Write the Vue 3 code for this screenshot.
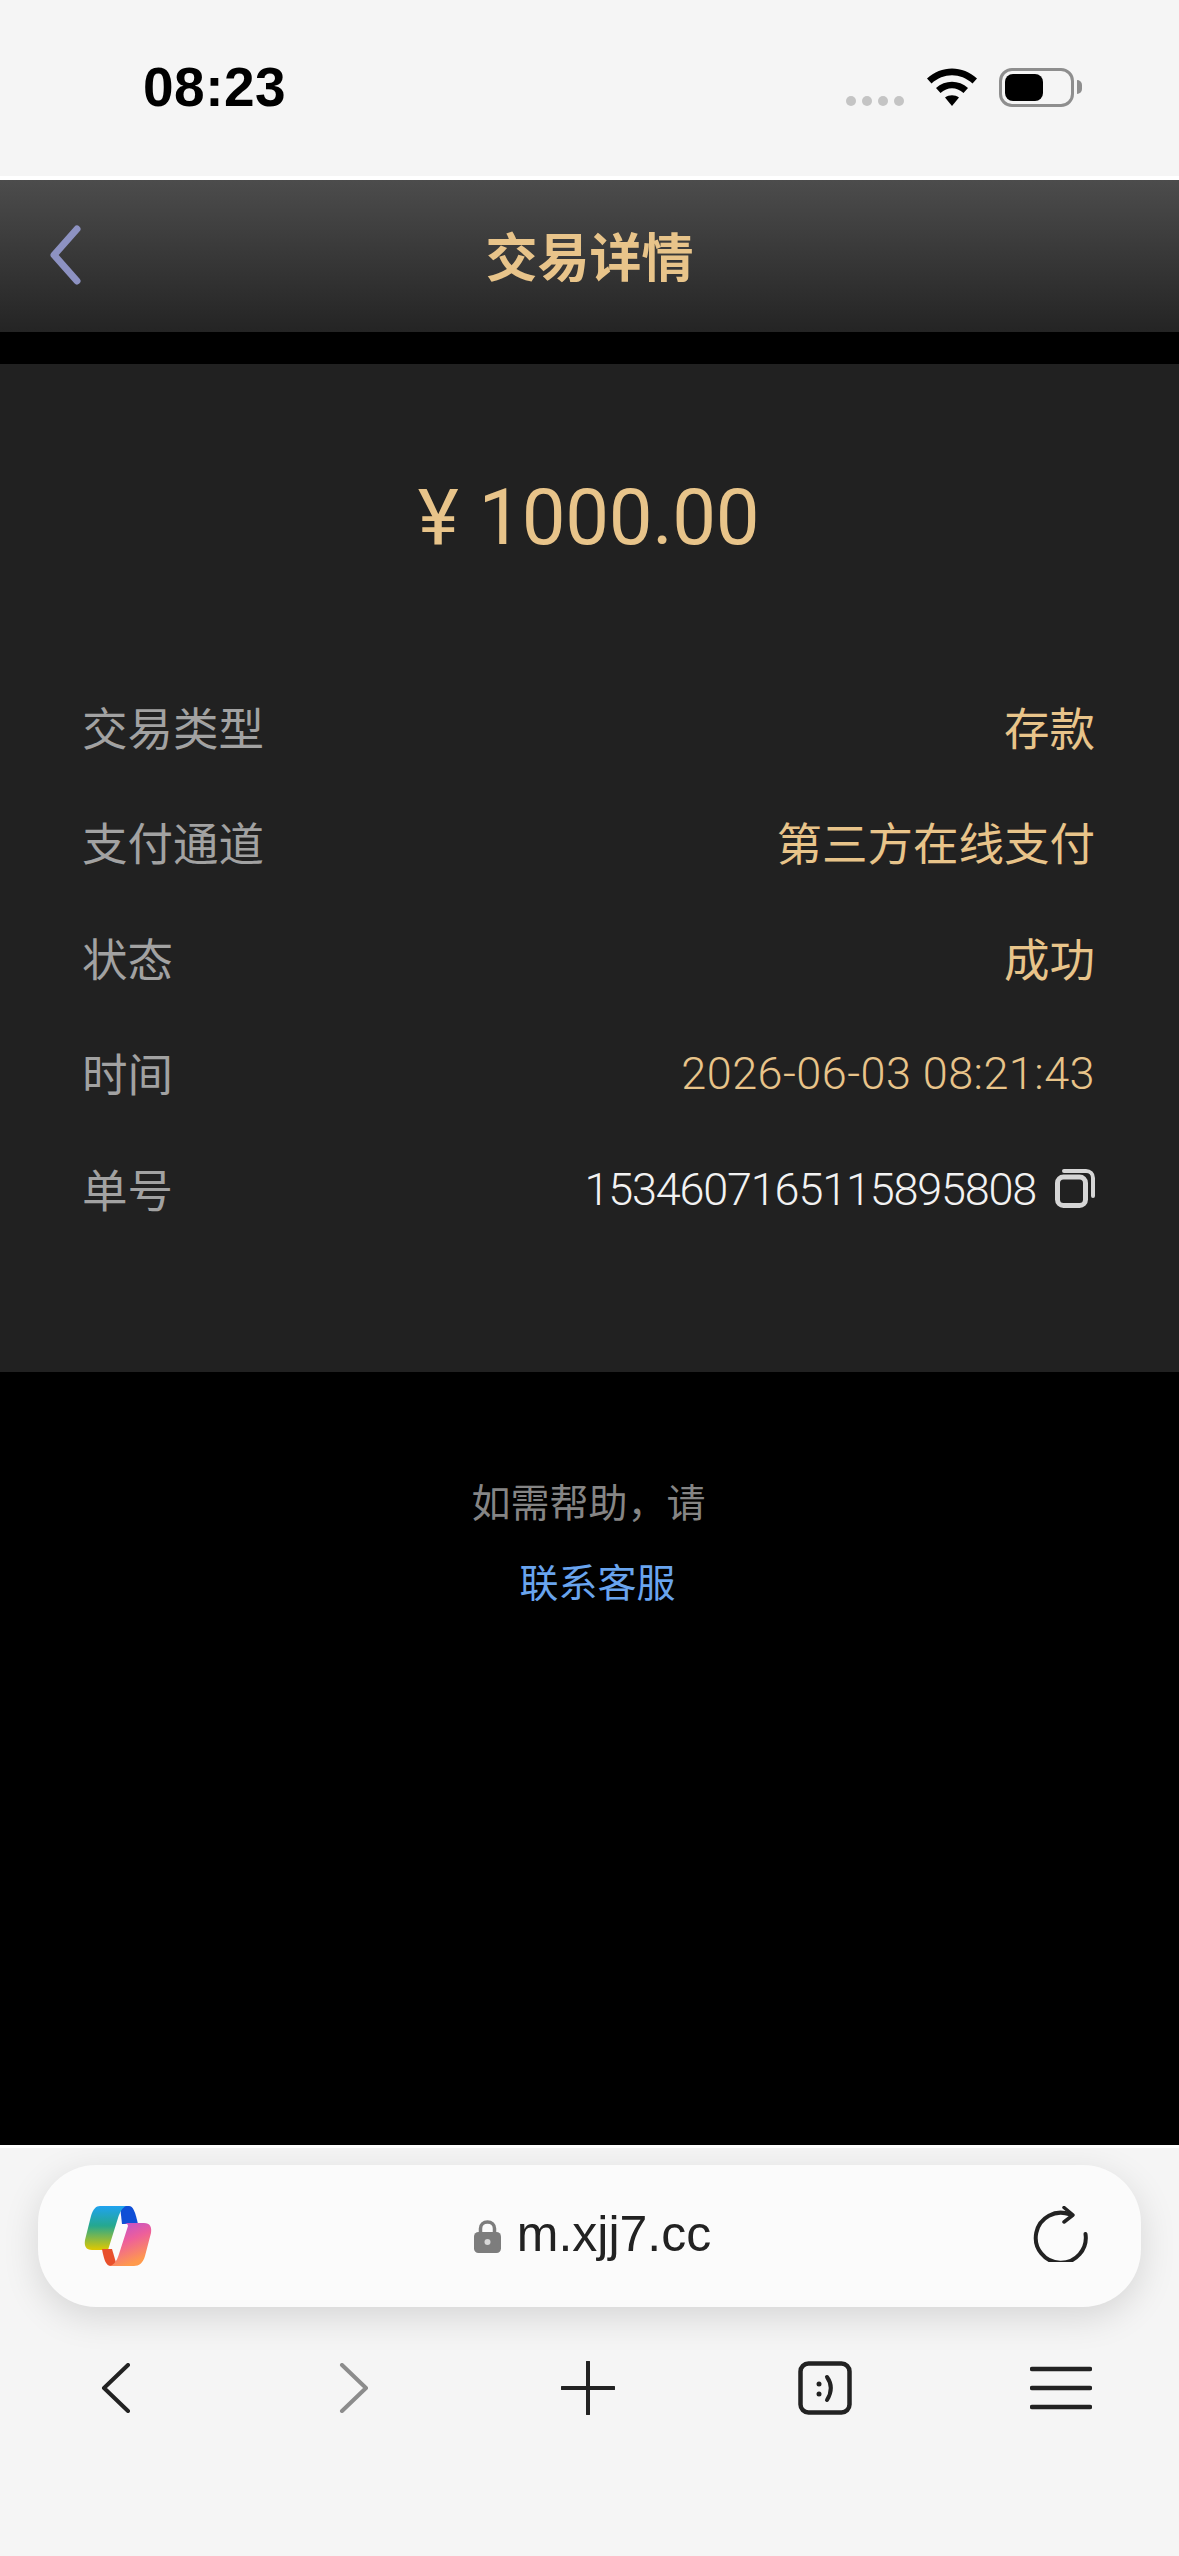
<script setup>
const rows = [
  { label: "交易类型", value: "存款" },
  { label: "支付通道", value: "第三方在线支付" },
  { label: "状态", value: "成功" },
  { label: "时间", value: "2026-06-03 08:21:43", time: true },
];
const orderNo = "1534607165115895808";
</script>

<template>
  <div class="page">
    <!-- status bar -->
    <div class="status-bar">
      <span class="clock">08:23</span>
      <div class="status-icons">
        <div class="signal"><i></i><i></i><i></i><i></i></div>
        <svg class="wifi" width="50" height="38" viewBox="0 0 50 38">
          <path d="M0 10.5C14-3 36-3 50 10.5L45.5 15.5C33.5 4.5 16.5 4.5 4.500 15.5Z" fill="#000" />
          <path d="M9 20C18 11.500 32 11.500 41 20L36.500 25C29.500 18.500 20.500 18.500 13.500 25Z" fill="#000" />
          <path d="M18 29.500C22 26.500 28 26.500 32 29.500L25 38Z" fill="#000" />
        </svg>
        <div class="battery"><div class="battery-fill"></div></div>
        <div class="battery-nub"></div>
      </div>
    </div>

    <!-- header -->
    <header class="nav">
      <svg class="nav-back" width="34" height="60" viewBox="0 0 34 60">
        <path d="M29 4L6 30L29 56" fill="none" stroke="#8d92c2" stroke-width="7" stroke-linecap="round" stroke-linejoin="round" />
      </svg>
      <h1 class="nav-title">交易详情</h1>
    </header>

    <!-- details -->
    <section class="card">
      <div class="amount"><span class="yen">¥</span>1000.00</div>
      <div v-for="row in rows" :key="row.label" class="row">
        <span class="label">{{ row.label }}</span>
        <span class="value" :class="{ time: row.time }">{{ row.value }}</span>
      </div>
      <div class="row">
        <span class="label">单号</span>
        <span class="order">
          <span class="num">{{ orderNo }}</span>
          <svg width="40" height="40" viewBox="0 0 40 40">
            <rect x="2.500" y="9" width="28" height="28.500" rx="6" fill="none" stroke="#d6d6d6" stroke-width="5" />
            <path d="M9 3H31C35 3 38 6 38 10V28" fill="none" stroke="#d6d6d6" stroke-width="4" stroke-linecap="round" />
          </svg>
        </span>
      </div>
    </section>

    <!-- help -->
    <div class="help">
      <div class="help-text">如需帮助，请</div>
      <div class="help-link">联系客服</div>
    </div>

    <!-- browser toolbar -->
    <div class="browser">
      <div class="address">
        <svg class="logo" width="68" height="60" viewBox="0 0 68 60">
          <defs>
            <linearGradient id="copilotA" x1="0" y1="0" x2="0" y2="1">
              <stop offset="0" stop-color="#1fa2f0" />
              <stop offset="0.45" stop-color="#25a88f" />
              <stop offset="1" stop-color="#e0c800" />
            </linearGradient>
            <linearGradient id="copilotB" x1="0" y1="0" x2="0.4" y2="1">
              <stop offset="0" stop-color="#b44fd8" />
              <stop offset="0.5" stop-color="#ee5f9a" />
              <stop offset="1" stop-color="#ff9a4d" />
            </linearGradient>
          </defs>
          <path d="M36 0H45C49 0 51 5 54 18H38Z" fill="#0f4fd6" />
          <path d="M16 0H42C38 2 36 6 34 12L24 44H8C2 44 0 40 1 34L7 10C9 3 12 0 16 0Z" fill="url(#copilotA)" />
          <path d="M18 43H28L33 60H27C22 60 20 54 18 43Z" fill="#e8502c" />
          <path d="M40 17H60C66 17 68 21 67 27L61 50C59 57 55 60 50 60H26C31 58 33 54 35 48L44 20C44 18 42 17 40 17Z" fill="url(#copilotB)" />
        </svg>
        <div class="url">
          <svg width="27" height="34" viewBox="0 0 27 34">
            <path d="M6.500 15V9.500C6.500 5.500 9.500 3 13.500 3S20.500 5.500 20.500 9.500V15" fill="none" stroke="#7d7d7d" stroke-width="3.500" />
            <rect x="0" y="13" width="27" height="21" rx="4.500" fill="#7d7d7d" />
            <circle cx="13.500" cy="23" r="3" fill="#d8d8d8" />
          </svg>
          <span class="url-text">m.xjj7.cc</span>
        </div>
        <svg class="reload" width="56" height="56" viewBox="0 0 56 56">
          <path d="M37 8.500A25 25 0 1 0 52.500 28" fill="none" stroke="#222" stroke-width="4" stroke-linecap="round" />
          <path d="M31 1.500L40 9L31 16" fill="none" stroke="#222" stroke-width="3.500" stroke-linecap="round" stroke-linejoin="round" />
        </svg>
      </div>
      <nav class="tools">
        <svg width="30" height="50" viewBox="0 0 30 50">
          <path d="M27 2L3 25L27 48" fill="none" stroke="#222" stroke-width="4" stroke-linecap="round" stroke-linejoin="round" />
        </svg>
        <svg class="forward" width="30" height="50" viewBox="0 0 30 50">
          <path d="M3 2L27 25L3 48" fill="none" stroke="#8c8c8c" stroke-width="4" stroke-linecap="round" stroke-linejoin="round" />
        </svg>
        <svg width="54" height="54" viewBox="0 0 54 54">
          <path d="M27 1V53M1 27H53" fill="none" stroke="#222" stroke-width="4" stroke-linecap="round" />
        </svg>
        <svg width="54" height="54" viewBox="0 0 54 54">
          <rect x="2.500" y="2.500" width="49" height="49" rx="8" fill="none" stroke="#222" stroke-width="4.500" />
          <circle cx="21" cy="23" r="2.500" fill="#222" />
          <circle cx="21" cy="33" r="2.500" fill="#222" />
          <path d="M29 16C34 23 34 31 29 39" fill="none" stroke="#222" stroke-width="4" stroke-linecap="round" />
        </svg>
        <svg width="62" height="46" viewBox="0 0 62 46">
          <path d="M2 4H60M2 23H60M2 42H60" fill="none" stroke="#222" stroke-width="4.500" stroke-linecap="round" />
        </svg>
      </nav>
    </div>
  </div>
</template>

<style scoped>
.page {
  width: 1179px;
  height: 2556px;
  display: flex;
  flex-direction: column;
  background: #000;
  overflow: hidden;
  font-family: "Noto Sans CJK SC", "Liberation Sans", sans-serif;
}

/* Status bar */
.status-bar {
  height: 176px;
  flex-shrink: 0;
  background: #f5f5f5;
  border-bottom: 4px solid #fff;
  display: flex;
  justify-content: space-between;
  padding: 0 97px 0 143px;
}

.clock {
  margin-top: 56px;
  height: 62px;
  font-family: "Liberation Sans", Arial, sans-serif;
  font-size: 55px;
  line-height: 62px;
  font-weight: 700;
  letter-spacing: 0.5px;
  color: #000;
}

.status-icons {
  display: flex;
  align-items: flex-start;
  padding-top: 68px;
}

.signal {
  display: flex;
  gap: 6px;
  margin: 28px 23px 0 0;
}

.signal i {
  width: 10px;
  height: 10px;
  border-radius: 50%;
  background: #c4c4c4;
}

.battery {
  width: 75px;
  height: 39px;
  margin-left: 22px;
  box-sizing: border-box;
  border: 3px solid #8e8e8e;
  border-radius: 13px;
  padding: 3px;
}

.battery-fill {
  width: 38px;
  height: 27px;
  background: #000;
  border-radius: 8px;
}

.battery-nub {
  width: 5px;
  height: 14px;
  margin: 12px 0 0 3px;
  background: #8e8e8e;
  border-radius: 0 7px 7px 0;
}

/* Header */
.nav {
  height: 152px;
  flex-shrink: 0;
  position: relative;
  display: flex;
  align-items: center;
  justify-content: center;
  background: linear-gradient(#4c4c4c, #242424);
}

.nav-back {
  position: absolute;
  left: 48px;
  top: 45px;
}

.nav-title {
  margin: 0 0 2px;
  font-size: 52px;
  font-weight: 700;
  line-height: 1;
  color: #e8c48a;
}

/* Card */
.card {
  margin-top: 32px;
  padding: 102px 84px 126px 82px;
  background: #212121;
}

.amount {
  height: 104px;
  margin-bottom: 98px;
  text-align: center;
  font-family: Roboto, sans-serif;
  font-size: 78px;
  line-height: 104px;
  letter-spacing: -0.4px;
  color: #e8c48a;
}

.yen {
  margin-right: 20px;
}

.row {
  height: 115.5px;
  display: flex;
  align-items: center;
  justify-content: space-between;
  font-size: 45.5px;
}

.label {
  color: #a2a2a2;
}

.value {
  color: #e8c48a;
}

.time {
  margin-top: 3px;
  font-family: Roboto, sans-serif;
  font-size: 45px;
  font-weight: 300;
  letter-spacing: 0.45px;
}

.num {
  margin-top: 3px;
  font-family: Roboto, sans-serif;
  font-size: 45px;
  font-weight: 300;
  letter-spacing: -1.2px;
}

.order {
  display: flex;
  align-items: center;
  gap: 19px;
  color: #f2f2f2;
}

/* Help */
.help {
  flex: 1;
  padding: 88px 0 0 16px;
  text-align: center;
  font-size: 39px;
  line-height: 80px;
}

.help-text {
  color: #858585;
  padding-right: 18px;
}

.help-link {
  color: #69a4ee;
}

/* Browser toolbar */
.browser {
  height: 411px;
  flex-shrink: 0;
  box-sizing: border-box;
  padding-top: 17px;
  background: #f5f5f5;
  border-top: 3px solid #fff;
}

.address {
  position: relative;
  height: 142px;
  margin: 0 38px;
  display: flex;
  align-items: center;
  justify-content: space-between;
  padding: 0 52px 0 46px;
  background: #fbfbfb;
  border-radius: 58px;
  box-shadow: 0 10px 36px rgba(0, 0, 0, 0.13);
}

.logo {
  flex-shrink: 0;
}

.reload {
  flex-shrink: 0;
  margin-bottom: 4px;
}

.url {
  display: flex;
  align-items: center;
  gap: 16px;
  font-family: "Liberation Sans", Arial, sans-serif;
  font-size: 50px;
  color: #222;
}

.url-text {
  margin-bottom: 4px;
}

.tools {
  display: grid;
  grid-template-columns: repeat(5, 1fr);
  justify-items: center;
  align-items: center;
  height: 54px;
  margin-top: 54px;
  margin-left: -2px;
}

.forward {
  margin-left: 4px;
}
</style>

<style>
body {
  background: #000;
}
</style>
